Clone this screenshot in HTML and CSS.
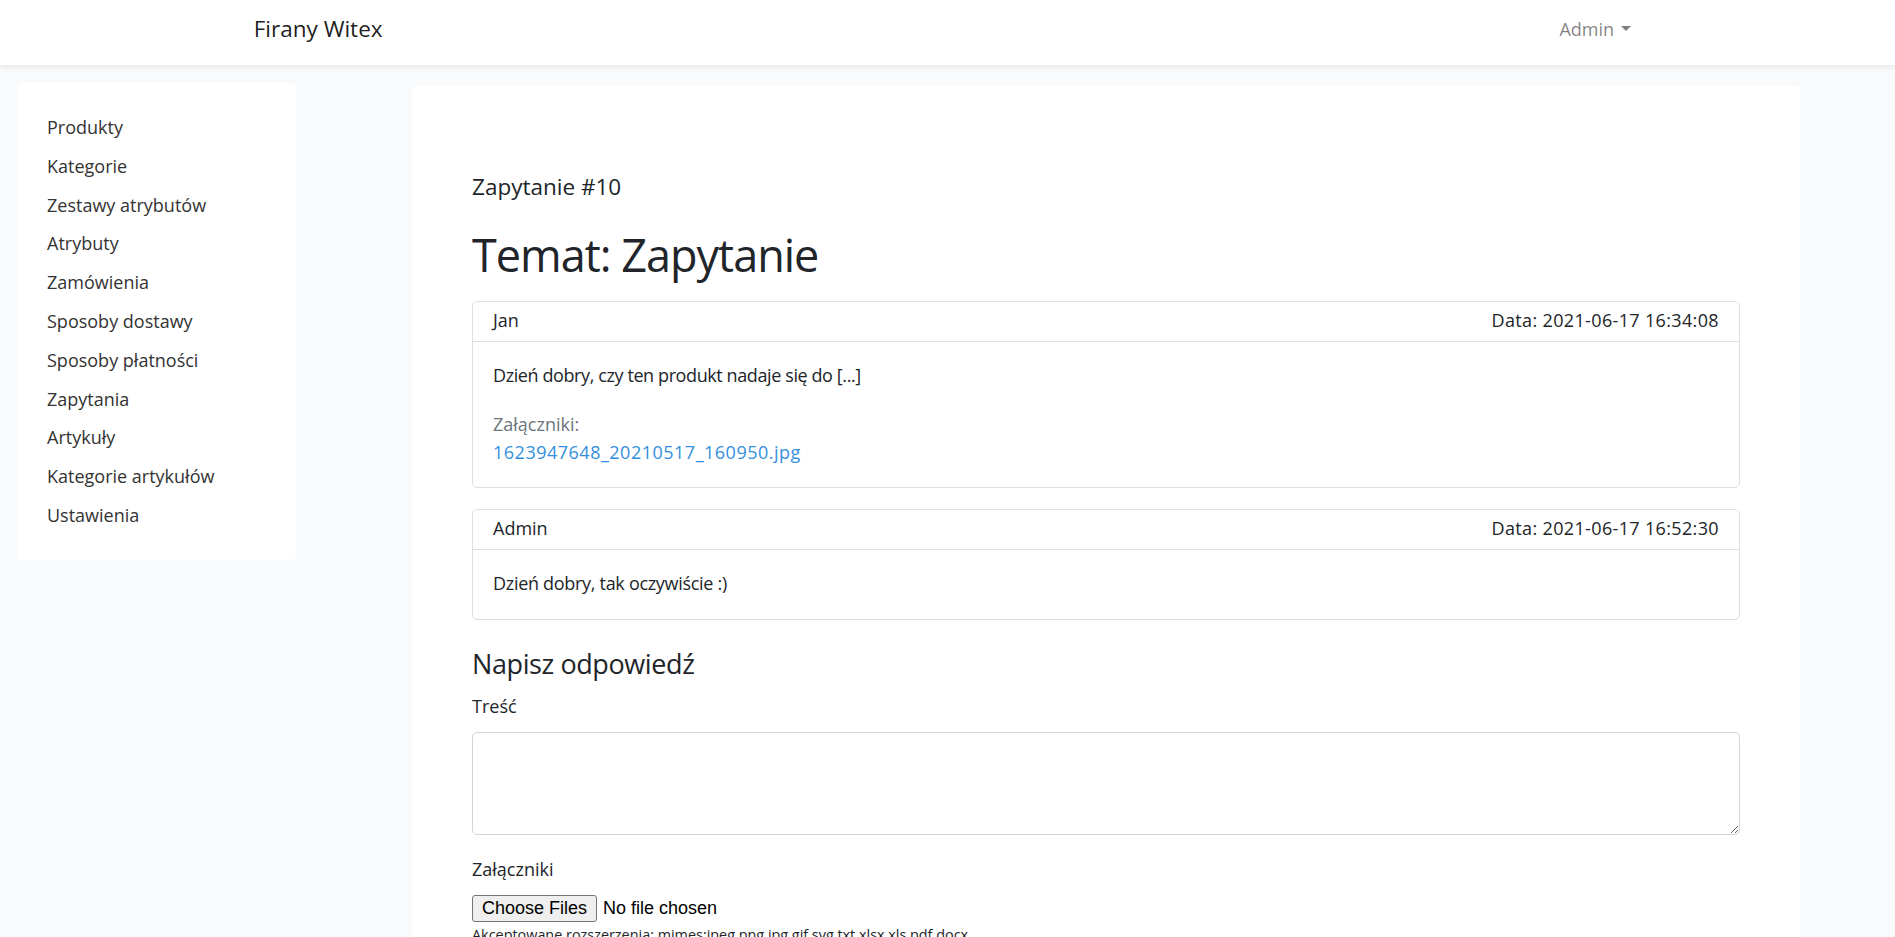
FILE: index.html
```html
<!DOCTYPE html>
<html lang="pl">
<head>
<meta charset="utf-8">
<title>Firany Witex - Zapytanie #10</title>
<link rel="stylesheet" href="styles.css">
</head>
<body>
<nav class="navbar">
  <div class="navbar-inner">
    <a class="brand" href="#">Firany Witex</a>
    <a class="user-menu" href="#">Admin<span class="caret"></span></a>
  </div>
</nav>
<div class="layout">
  <aside class="sidebar">
    <ul class="side-nav">
      <li><a href="#">Produkty</a></li>
      <li><a href="#">Kategorie</a></li>
      <li><a href="#">Zestawy atrybutów</a></li>
      <li><a href="#">Atrybuty</a></li>
      <li><a href="#">Zamówienia</a></li>
      <li><a href="#">Sposoby dostawy</a></li>
      <li><a href="#">Sposoby płatności</a></li>
      <li><a href="#">Zapytania</a></li>
      <li><a href="#">Artykuły</a></li>
      <li><a href="#">Kategorie artykułów</a></li>
      <li><a href="#">Ustawienia</a></li>
    </ul>
  </aside>
  <main class="content-card">
    <h5 class="inquiry-no">Zapytanie #10</h5>
    <h1 class="subject">Temat: Zapytanie</h1>

    <div class="msg">
      <div class="msg-header"><span>Jan</span><span class="msg-date">Data: 2021-06-17 16:34:08</span></div>
      <div class="msg-body">
        <p class="msg-text">Dzień dobry, czy ten produkt nadaje się do [...]</p>
        <div class="attach-label">Załączniki:</div>
        <div><a class="attach-link" href="#">1623947648_20210517_160950.jpg</a></div>
      </div>
    </div>

    <div class="msg">
      <div class="msg-header"><span>Admin</span><span class="msg-date">Data: 2021-06-17 16:52:30</span></div>
      <div class="msg-body">
        <p class="msg-text last">Dzień dobry, tak oczywiście :)</p>
      </div>
    </div>

    <h4 class="reply-title">Napisz odpowiedź</h4>
    <form class="reply-form">
      <div class="form-group">
        <label class="form-label" for="tresc">Treść</label>
        <textarea id="tresc" class="form-control" rows="3"></textarea>
      </div>
      <div class="form-group">
        <label class="form-label" for="files">Załączniki</label>
        <input id="files" class="file-input" type="file" multiple>
        <small class="form-text">Akceptowane rozszerzenia: mimes:jpeg,png,jpg,gif,svg,txt,xlsx,xls,pdf,docx</small>
      </div>
    </form>
  </main>
</div>
</body>
</html>
```
FILE: styles.css
```css
html, body {
  margin: 0;
}

body {
  background: #f8fafc;
  font-family: "Open Sans", "Noto Sans", sans-serif;
  font-size: 18px;
  line-height: 1.6;
  color: #212529;
}

/* ---------- navbar ---------- */
.navbar {
  height: 65px;
  background: #fff;
  box-shadow: 0 2.5px 5px rgba(0, 0, 0, 0.075);
  position: relative;
  z-index: 2;
}

.navbar-inner {
  width: 1425px;
  margin: 0 auto;
  padding: 0 18.75px;
  box-sizing: border-box;
  display: flex;
  justify-content: space-between;
  align-items: flex-start;
}

.brand {
  padding-top: 10.5px;
  font-size: 22.5px;
  line-height: 36px;
  color: rgba(0, 0, 0, 0.9);
  text-decoration: none;
}

.user-menu {
  padding: 14.6px 10px 0;
  line-height: 28.8px;
  color: rgba(0, 0, 0, 0.5);
  text-decoration: none;
}

.caret {
  display: inline-block;
  width: 0;
  height: 0;
  margin-left: 0.4em;
  vertical-align: 0.255em;
  border-top: 0.3em solid;
  border-left: 0.3em solid transparent;
  border-right: 0.3em solid transparent;
}

/* ---------- layout ---------- */
.layout {
  display: flex;
  align-items: flex-start;
  gap: 116px;
  padding: 18px 95px 0 17px;
}

.sidebar {
  width: 279px;
  flex: none;
  box-sizing: border-box;
  padding: 25px;
  background: #fff;
  border-radius: 5px;
}

.side-nav {
  list-style: none;
  margin: 0;
  padding: 0;
}

.side-nav a {
  display: block;
  padding: 5px;
  color: #333;
  text-decoration: none;
}

.content-card {
  flex: 1;
  margin-top: 3px;
  padding: 87px 60px 60px;
  background: #fff;
  border-radius: 5px;
}

/* ---------- headings ---------- */
.inquiry-no {
  margin: 0 0 27.5px;
  font-size: 22.5px;
  line-height: 1.2;
  font-weight: 400;
}

.subject {
  margin: 0 0 19.5px;
  font-size: 45px;
  line-height: 1.2;
  font-weight: 400;
  letter-spacing: -1px;
}

.reply-title {
  margin: 28px 0 12px;
  font-size: 27px;
  line-height: 1.2;
  font-weight: 400;
  letter-spacing: -0.4px;
}

/* ---------- message cards ---------- */
.msg {
  border: 1px solid #dfdfdf;
  border-radius: 5px;
  margin-bottom: 21px;
  background: #fff;
}

.msg-header {
  display: flex;
  justify-content: space-between;
  padding: 4px 20px 6px;
  border-bottom: 1px solid #dfdfdf;
}

.msg-date {
  letter-spacing: 0.35px;
}

.msg-body {
  padding: 19px 20px 20px;
}

.msg-text {
  margin: 0 0 20px;
  letter-spacing: -0.4px;
}

.msg-text.last {
  margin: 0 0 1px;
  letter-spacing: -0.3px;
}

.attach-label {
  color: #6c757d;
}

.attach-link {
  color: #3490dc;
  text-decoration: none;
  letter-spacing: 0.5px;
}

/* ---------- form ---------- */
.form-group {
  margin-bottom: 20px;
}

.form-label {
  display: inline-block;
  margin-bottom: 11px;
}

.form-control {
  display: block;
  width: 100%;
  height: 103.4px;
  box-sizing: border-box;
  padding: 7.5px 15px;
  font: inherit;
  color: #495057;
  background: #fff;
  border: 1px solid #ced4da;
  border-radius: 5px;
}

.file-input {
  display: block;
  width: 100%;
  font-family: "Liberation Sans", Arial, sans-serif;
  font-size: 18px;
  color: #000;
}

.file-input::file-selector-button {
  font: inherit;
  padding: 2px 9px;
  margin-right: 6px;
  color: #000;
  background: #efefef;
  border: 1px solid #767676;
  border-radius: 3px;
}

.form-text {
  display: block;
  margin-top: 1px;
  font-size: 14.4px;
  line-height: 1.6;
  color: #212529;
}
```
